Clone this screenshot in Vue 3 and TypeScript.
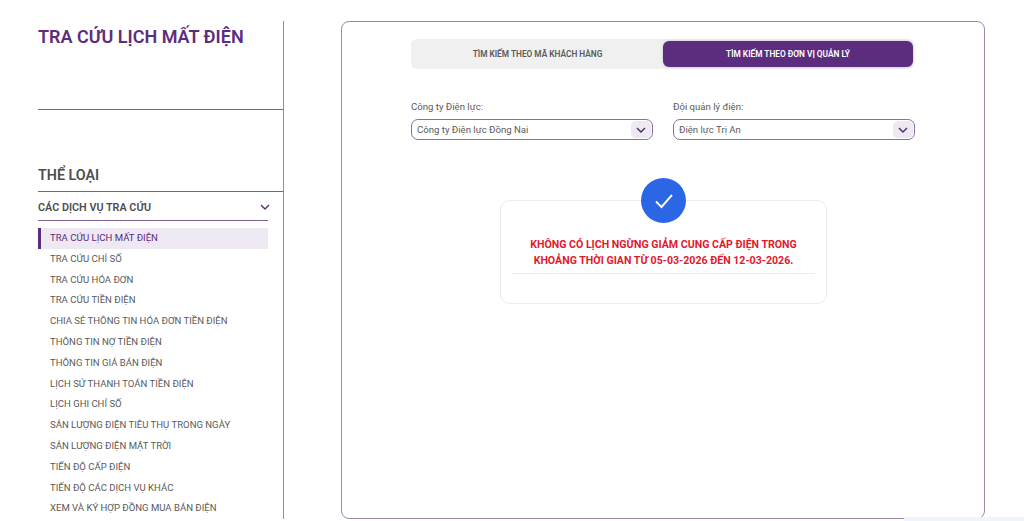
<template>
  <div class="page">
    <aside class="sidebar">
      <h1 class="page-title">TRA CỨU LỊCH MẤT ĐIỆN</h1>
      <h2 class="category-title">THỂ LOẠI</h2>
      <div class="group-head">
        <span>CÁC DỊCH VỤ TRA CỨU</span>
        <svg class="group-chevron" width="10" height="6" viewBox="0 0 10 6">
          <path d="M1 1l4 4 4-4" fill="none" stroke="#5c2d7e" stroke-width="1.4" />
        </svg>
      </div>
      <ul class="menu">
        <li
          v-for="(item, index) in menuItems"
          :key="item"
          class="menu-item"
          :class="{ active: index === 0 }"
        >
          {{ item }}
        </li>
      </ul>
    </aside>

    <main class="panel">
      <div class="tabs">
        <button class="tab">TÌM KIẾM THEO MÃ KHÁCH HÀNG</button>
        <button class="tab active">TÌM KIẾM THEO ĐƠN VỊ QUẢN LÝ</button>
      </div>

      <div class="filters">
        <div v-for="field in fields" :key="field.label" class="field">
          <label class="field-label">{{ field.label }}</label>
          <div class="select">
            <span>{{ field.value }}</span>
            <span class="select-arrow">
              <svg width="10" height="6" viewBox="0 0 10 6">
                <path d="M1 1l4 4 4-4" fill="none" stroke="#4a2a66" stroke-width="1.4" />
              </svg>
            </span>
          </div>
        </div>
      </div>

      <div class="notice">
        <div class="notice-icon">
          <svg width="20" height="16" viewBox="0 0 20 16">
            <path d="M2 8.5l5.5 5.5L18 2" fill="none" stroke="#fff" stroke-width="1.9" />
          </svg>
        </div>
        <p class="notice-text">
          KHÔNG CÓ LỊCH NGỪNG GIẢM CUNG CẤP ĐIỆN TRONG<br />
          KHOẢNG THỜI GIAN TỪ 05-03-2026 ĐẾN 12-03-2026.
        </p>
        <div class="notice-actions"></div>
      </div>
    </main>

    <div class="corner-strip"></div>
  </div>
</template>

<script setup lang="ts">
const menuItems: string[] = [
  'TRA CỨU LỊCH MẤT ĐIỆN',
  'TRA CỨU CHỈ SỐ',
  'TRA CỨU HÓA ĐƠN',
  'TRA CỨU TIỀN ĐIỆN',
  'CHIA SẺ THÔNG TIN HÓA ĐƠN TIỀN ĐIỆN',
  'THÔNG TIN NỢ TIỀN ĐIỆN',
  'THÔNG TIN GIÁ BÁN ĐIỆN',
  'LỊCH SỬ THANH TOÁN TIỀN ĐIỆN',
  'LỊCH GHI CHỈ SỐ',
  'SẢN LƯỢNG ĐIỆN TIÊU THỤ TRONG NGÀY',
  'SẢN LƯỢNG ĐIỆN MẶT TRỜI',
  'TIẾN ĐỘ CẤP ĐIỆN',
  'TIẾN ĐỘ CÁC DỊCH VỤ KHÁC',
  'XEM VÀ KÝ HỢP ĐỒNG MUA BÁN ĐIỆN',
];

const fields = [
  { label: 'Công ty Điện lực:', value: 'Công ty Điện lực Đồng Nai' },
  { label: 'Đội quản lý điện:', value: 'Điện lực Trị An' },
];
</script>

<style>
html,
body {
  margin: 0;
  background: #fff;
  overflow: hidden;
}
</style>

<style scoped>
.page {
  position: relative;
  display: flex;
  height: 521px;
  padding: 21px 39px 2px 38px;
  box-sizing: border-box;
  font-family: Roboto, "Noto Sans", sans-serif;
  overflow: hidden;
}

.sidebar {
  width: 245px;
  flex: none;
  border-right: 1px solid #9c88ab;
  box-sizing: content-box;
  overflow: hidden;
}

.page-title {
  margin: 0;
  height: 88px;
  border-bottom: 1px solid #7d5f94;
  font-size: 18px;
  line-height: 32px;
  font-weight: 600;
  color: #5c2d7e;
}

.category-title {
  margin: 55px 0 0;
  padding-bottom: 6px;
  border-bottom: 1px solid #7d5f94;
  font-size: 14.3px;
  line-height: 20px;
  font-weight: 600;
  color: #4d4d4d;
}

.group-head {
  display: flex;
  align-items: center;
  justify-content: space-between;
  width: 230px;
  height: 29px;
  padding-top: 2px;
  box-sizing: border-box;
  border-bottom: 1px solid #7d5f94;
  font-size: 10.8px;
  font-weight: 600;
  color: #4d4d4d;
}

.group-chevron {
  margin-right: -2px;
}

.menu {
  list-style: none;
  margin: 7px 0 0;
  padding: 0;
  width: 230px;
}

.menu-item {
  height: 20.8px;
  padding-left: 12px;
  font-size: 9.55px;
  line-height: 20.8px;
  color: #5a5a5a;
  white-space: nowrap;
}

.menu-item.active {
  padding-left: 9px;
  border-left: 3px solid #5c2d7e;
  background: #ede8f1;
  color: #5c2d7e;
}

.panel {
  flex: 1;
  min-width: 0;
  margin-left: 57px;
  padding: 17px 0 0 69px;
  box-sizing: border-box;
  border: 1px solid #9c88ab;
  border-radius: 8px;
}

.tabs {
  display: flex;
  align-items: center;
  width: 503px;
  height: 30px;
  padding-right: 1px;
  box-sizing: border-box;
  background: #f0f0f0;
  border-radius: 6px;
}

.tab {
  flex: 1;
  height: 26px;
  padding: 0 0 0 1px;
  border: 0;
  border-radius: 6px;
  background: transparent;
  font-family: inherit;
  font-size: 8.3px;
  font-weight: 600;
  color: #5a5a5a;
}

.tab.active {
  flex: 0 0 250px;
  padding: 0;
  background: #5c2d7e;
  color: #fff;
  box-shadow: 0 0 3px rgba(92, 45, 126, 0.25);
}

.filters {
  display: flex;
  gap: 20px;
  margin-top: 30px;
  width: 504px;
}

.field {
  flex: 1;
}

.field-label {
  display: block;
  height: 20px;
  font-size: 9.6px;
  line-height: 15px;
  color: #5a5a5a;
}

.select {
  display: flex;
  align-items: center;
  justify-content: space-between;
  height: 21px;
  padding: 0 1px 0 5px;
  box-sizing: border-box;
  border: 1px solid #8a6ea0;
  border-radius: 7px;
  font-size: 9.6px;
  color: #5a5a5a;
}

.select-arrow {
  display: flex;
  align-items: center;
  justify-content: center;
  width: 20px;
  height: 17px;
  border-radius: 5px;
  background: #ede8f1;
}

.notice {
  position: relative;
  width: 327px;
  height: 104px;
  margin: 60px 0 0 89px;
  padding: 0 11px;
  box-sizing: border-box;
  border: 1px solid #ececec;
  border-radius: 10px;
}

.notice-icon {
  position: absolute;
  left: 140px;
  top: -23px;
  display: flex;
  align-items: center;
  justify-content: center;
  width: 45px;
  height: 45px;
  border-radius: 50%;
  background: #2b66e5;
}

.notice-text {
  margin: 0;
  padding: 36px 0 4px;
  border-bottom: 1px solid #ececec;
  font-size: 10.6px;
  line-height: 16px;
  font-weight: 700;
  text-align: center;
  color: #e2182d;
}

.corner-strip {
  position: absolute;
  right: 0;
  bottom: 0;
  width: 120px;
  height: 4px;
  background: #f0f4fc;
}
</style>
